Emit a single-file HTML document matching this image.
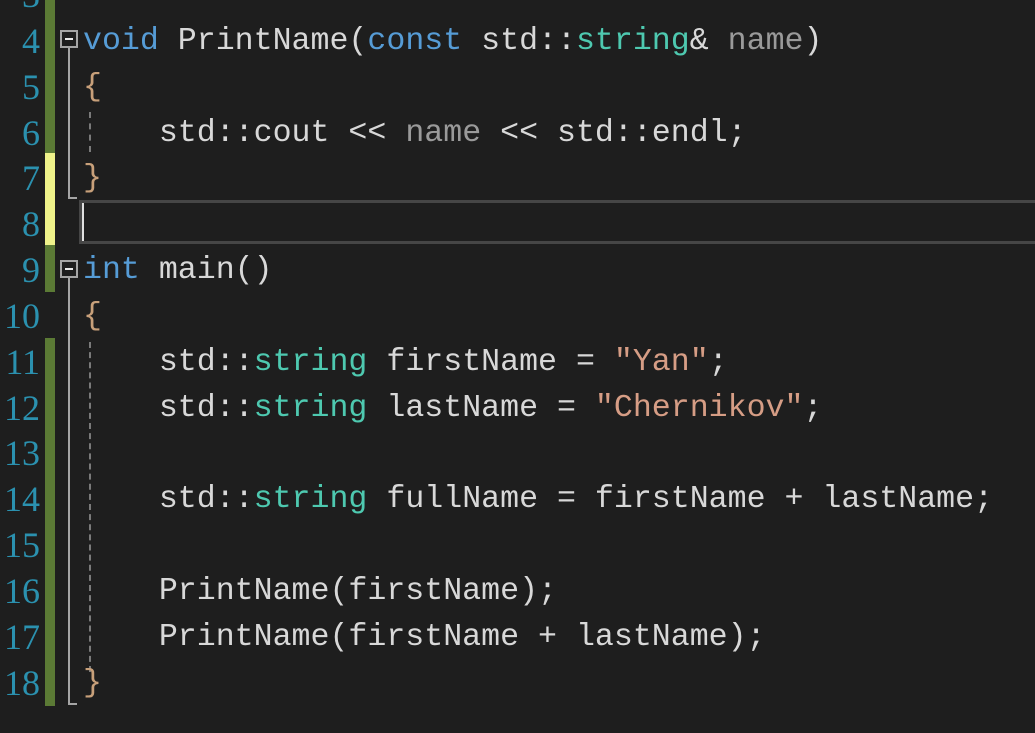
<!DOCTYPE html>
<html><head><meta charset="utf-8"><style>
html,body{margin:0;padding:0;background:#1e1e1e;width:1035px;height:733px;overflow:hidden;position:relative}
.l{position:absolute;left:83px;height:46px;line-height:46px;font-family:"Liberation Mono",monospace;font-size:31.6px;color:#d8d8d8;white-space:pre;margin-top:2px}
.n{position:absolute;left:0;width:40px;text-align:right;height:46px;line-height:46px;font-family:"Liberation Serif",serif;font-size:36px;color:#2b91af;margin-top:1px}
.k{color:#569cd6}.t{color:#4ec9b0}.s{color:#d69d85}.p{color:#9a9a9a}.b{color:#c8a07a}
.bar{position:absolute;left:45px;width:10px}
.box{position:absolute;left:60px;width:18px;height:18px;border:2px solid #a5a5a5;box-sizing:border-box}
.box:after{content:"";position:absolute;left:3px;top:6px;width:8px;height:2px;background:#e8e8e8}
.vl{position:absolute;left:68px;width:2px;background:#a5a5a5}
.hl{position:absolute;left:68px;height:2px;width:9px;background:#a5a5a5}
.dg{position:absolute;left:89px;width:0;border-left:2px dashed #7a7a7a}
</style></head><body>
<div class="bar" style="top:0;height:153px;background:#5b7a35"></div>
<div class="bar" style="top:153px;height:92px;background:#eff28a"></div>
<div class="bar" style="top:245px;height:47px;background:#5b7a35"></div>
<div class="bar" style="top:338px;height:368px;background:#5b7a35"></div>

<div class="box" style="top:30px"></div>
<div class="vl" style="top:48px;height:151px"></div>
<div class="hl" style="top:197px"></div>
<div class="dg" style="top:112px;height:40px"></div>
<div style="position:absolute;left:79px;top:200px;width:960px;height:44px;border:3px solid #464646;border-right:none;box-sizing:border-box"></div>
<div style="position:absolute;left:82px;top:203px;width:2px;height:38px;background:#e0e0e0"></div>

<div class="box" style="top:260px"></div>
<div class="vl" style="top:278px;height:427px"></div>
<div class="hl" style="top:703px"></div>
<div class="dg" style="top:342px;height:330px"></div>

<div class="n" style="top:-29px">3</div>
<div class="n" style="top:17px">4</div><div class="l" style="top:17px"><span class="k">void</span> PrintName(<span class="k">const</span> std::<span class="t">string</span>&amp; <span class="p">name</span>)</div>
<div class="n" style="top:63px">5</div><div class="l" style="top:63px"><span class="b">{</span></div>
<div class="n" style="top:109px">6</div><div class="l" style="top:109px">    std::cout &lt;&lt; <span class="p">name</span> &lt;&lt; std::endl;</div>
<div class="n" style="top:154px">7</div><div class="l" style="top:154px"><span class="b">}</span></div>
<div class="n" style="top:200px">8</div>
<div class="n" style="top:246px">9</div><div class="l" style="top:246px"><span class="k">int</span> main()</div>
<div class="n" style="top:292px">10</div><div class="l" style="top:292px"><span class="b">{</span></div>
<div class="n" style="top:338px">11</div><div class="l" style="top:338px">    std::<span class="t">string</span> firstName = <span class="s">"Yan"</span>;</div>
<div class="n" style="top:384px">12</div><div class="l" style="top:384px">    std::<span class="t">string</span> lastName = <span class="s">"Chernikov"</span>;</div>
<div class="n" style="top:429px">13</div>
<div class="n" style="top:475px">14</div><div class="l" style="top:475px">    std::<span class="t">string</span> fullName = firstName + lastName;</div>
<div class="n" style="top:521px">15</div>
<div class="n" style="top:567px">16</div><div class="l" style="top:567px">    PrintName(firstName);</div>
<div class="n" style="top:613px">17</div><div class="l" style="top:613px">    PrintName(firstName + lastName);</div>
<div class="n" style="top:659px">18</div><div class="l" style="top:659px"><span class="b">}</span></div>
</body></html>
